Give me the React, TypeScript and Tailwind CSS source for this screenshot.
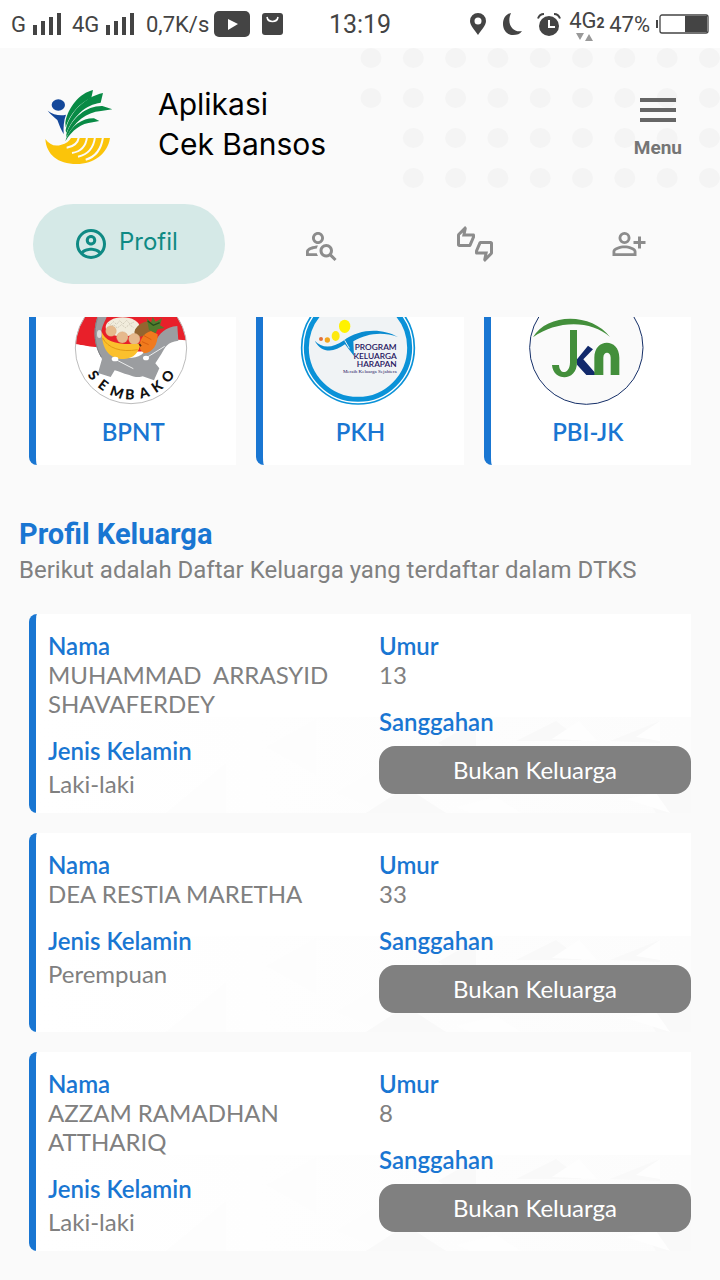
import React from 'react';
import { MdOutlineThumbsUpDown } from 'react-icons/md';

interface Member {
  name: string;
  gender: string;
  age: number;
}

const members: Member[] = [
  { name: 'MUHAMMAD  ARRASYID SHAVAFERDEY', gender: 'Laki-laki', age: 13 },
  { name: 'DEA RESTIA MARETHA', gender: 'Perempuan', age: 33 },
  { name: 'AZZAM RAMADHAN ATTHARIQ', gender: 'Laki-laki', age: 8 },
];

const Signal = () => (
  <svg width="28" height="22" viewBox="0 0 28 22" fill="#444">
    <path d="M0 12h4v10H0zM8 8h4v14H8zM16 4h4v18h-4zM24 0h4v22h-4z" />
  </svg>
);

const StatusBar = () => (
  <div className="flex h-12 items-center bg-white px-[11px] font-['Roboto',sans-serif] text-[22px] text-[#444]">
    <div className="flex flex-1 items-center">
      <span className="w-[22px]">G</span>
      <Signal />
      <span className="ml-[11px] w-[34px]">4G</span>
      <Signal />
      <span className="ml-3 w-[68px]">0,7K/s</span>
      <svg width="36" height="26" viewBox="0 0 36 26">
        <rect width="36" height="26" rx="5" fill="#444" />
        <path d="M14 8l10 5-10 6z" fill="#fff" />
      </svg>
      <svg className="ml-3" width="21" height="22" viewBox="0 0 21 22">
        <rect width="21" height="22" rx="3" fill="#444" />
        <path d="M5 4c1 6 10 6 11 0" fill="none" stroke="#fff" strokeWidth="1.6" />
      </svg>
    </div>
    <span className="text-[25px]">13:19</span>
    <div className="flex flex-1 items-center justify-end">
      <svg width="16" height="22" viewBox="0 0 16 22" fill="#444">
        <path
          fillRule="evenodd"
          d="M8 0a8 8 0 0 0-8 8c0 5 5 9 8 14 3-5 8-9 8-14a8 8 0 0 0-8-8zm0 4.500a3.500 3.500 0 1 1 0 7 3.500 3.500 0 0 1 0-7z"
        />
      </svg>
      <svg className="ml-[17px]" width="19" height="22" viewBox="0 0 19 22" fill="#444">
        <path d="M8 0C3 1 0 5 0 11c0 6 4 11 10 11 4 0 7-1 9-4C10 20 3 11 8 0z" />
      </svg>
      <svg className="ml-[15px]" width="24" height="23" viewBox="0 0 24 23">
        <circle cx="12" cy="13" r="10" fill="#444" />
        <path d="M1 5.500C2 2.500 4 1 7 1M23 5.500C22 2.500 20 1 17 1" fill="none" stroke="#444" strokeWidth="2" />
        <path d="M12 7v7h6" fill="none" stroke="#fff" strokeWidth="2" />
      </svg>
      <span className="relative ml-2 flex w-[34px] items-baseline pb-[6px] leading-7">
        4G<span className="text-sm font-bold leading-4">2</span>
        <svg className="absolute bottom-0 left-[7px]" width="18" height="8" viewBox="0 0 18 8" fill="#999">
          <path d="M0 0h8L4 7zM9 8h8l-4-7z" />
        </svg>
      </span>
      <span className="ml-[6px]">47%</span>
      <svg className="ml-[6px]" width="53" height="20" viewBox="0 0 53 20">
        <path d="M1 6v8" stroke="#444" strokeWidth="2" />
        <rect x="4" y="1" width="48" height="18" rx="2" fill="#fff" stroke="#444" strokeWidth="1.3" />
        <path d="M29 2h22v16H29z" fill="#444" />
      </svg>
    </div>
  </div>
);

const Dots = () => {
  const dots: React.ReactNode[] = [];
  for (let row = 0; row < 4; row++) {
    for (let col = row < 2 ? 0 : 1; col < 9; col++) {
      dots.push(<ellipse key={`${row}-${col}`} cx={11 + col * 42.3} cy={10 + row * 40} rx="10.500" ry="10" />);
    }
  }
  return (
    <svg className="absolute right-0 top-0" width="360" height="142" viewBox="0 0 360 142" fill="#f4f4f4">
      {dots}
    </svg>
  );
};

const AppLogo = () => (
  <svg width="70" height="76" viewBox="72 87 210 228">
    <ellipse cx="115" cy="135" rx="20" ry="17" fill="#14489a" />
    <path d="M83 152c16 12 36 16 55 12-7 18-8 38-7 59-8-14-13-27-19-43-9-8-20-17-29-28z" fill="#14489a" />
    <g fill="#088a45">
      <path d="M136 188c7-46 44-89 83-98l-5 24c-35 14-65 48-77 88z" />
      <path d="M137 211c11-54 59-101 112-112l-7 29c-45 5-84 43-103 91z" />
      <path d="M139 223c17-51 61-86 108-85l30 10-34 5c-45 3-79 33-104 79z" />
      <path d="M139 234c17-39 49-60 83-59l16 8-20 4c-35 3-61 23-82 57z" />
    </g>
    <path
      d="M76 237c12 17 29 24 48 17 14-3 24-10 29-20h117c-7 48-49 78-100 78-57 0-91-29-94-75z"
      fill="#fbc40a"
    />
    <g fill="none" stroke="#fafafa" strokeWidth="6">
      <path d="M177 231c-3 16-15 29-37 32" />
      <path d="M201 231c-3 28-20 44-45 48" />
      <path d="M225 231c-4 33-23 53-51 59" />
      <path d="M249 231c-5 37-24 60-52 68" />
    </g>
  </svg>
);

const Header = () => (
  <header className="relative flex items-start pb-[39px] pl-11 pr-[38px] pt-9">
    <Dots />
    <div className="pt-[5px]">
      <AppLogo />
    </div>
    <h1 className="ml-11 flex-1 font-['Inter',sans-serif] text-[30px] leading-10 text-black">
      Aplikasi
      <br />
      Cek Bansos
    </h1>
    <button
      type="button"
      className="relative mt-[14px] flex flex-col items-center gap-4 font-['Roboto',sans-serif] text-[19px] font-bold leading-5 text-[#757575]"
    >
      <svg width="36" height="24" viewBox="0 0 36 24" fill="#666">
        <path d="M0 0h36v4H0zM0 10h36v4H0zM0 20h36v4H0z" />
      </svg>
      Menu
    </button>
  </header>
);

const Tabs = () => (
  <nav className="flex pl-[33px] pr-[14px] text-[#8c8c8c]">
    <a
      href="#profil"
      className="mr-[19px] flex h-20 w-48 items-center gap-[10px] rounded-full bg-[#d5e9e7] pl-10 font-['Inter',sans-serif] text-2xl text-[#0f8a84]"
    >
      <svg width="36" height="36" viewBox="0 0 24 24" fill="currentColor">
        <path d="M12,2A10,10 0 0,0 2,12A10,10 0 0,0 12,22A10,10 0 0,0 22,12A10,10 0 0,0 12,2M7.07,18.28C7.5,17.38 10.12,16.5 12,16.5C13.88,16.5 16.5,17.38 16.93,18.28C15.57,19.36 13.86,20 12,20C10.14,20 8.43,19.36 7.07,18.28M18.36,16.83C16.93,15.09 13.46,14.5 12,14.5C10.54,14.5 7.07,15.09 5.64,16.83C4.62,15.5 4,13.82 4,12C4,7.59 7.59,4 12,4C16.41,4 20,7.59 20,12C20,13.82 19.38,15.5 18.36,16.83M12,6C10.06,6 8.5,7.56 8.5,9.5C8.5,11.44 10.06,13 12,13C13.94,13 15.5,11.44 15.5,9.5C15.5,7.56 13.94,6 12,6M12,11A1.5,1.5 0 0,1 10.5,9.5A1.5,1.5 0 0,1 12,8A1.5,1.5 0 0,1 13.5,9.5A1.5,1.5 0 0,1 12,11Z" />
      </svg>
      <span className="pb-1">Profil</span>
    </a>
    <a href="#cari" aria-label="Cari" className="flex flex-1 items-center justify-center">
      <svg width="36" height="36" viewBox="0 0 24 24" fill="currentColor">
        <path d="M10 13C9.65 13.59 9.36 14.24 9.19 14.93C6.5 15.16 3.9 16.42 3.9 17V18.1H9.2C9.37 18.78 9.65 19.42 10 20H2V17C2 14.34 7.33 13 10 13M10 4C12.21 4 14 5.79 14 8C14 9.95 12.6 11.58 10.75 11.93C10.5 11.98 10.25 12 10 12C7.79 12 6 10.21 6 8S7.79 4 10 4M10 5.9C8.84 5.9 7.9 6.84 7.9 8S8.84 10.1 10 10.1 12.1 9.16 12.1 8 11.16 5.9 10 5.9M15.5 12C18 12 20 14 20 16.5C20 17.38 19.75 18.21 19.31 18.9L22.39 22L21 23.39L17.88 20.32C17.19 20.75 16.37 21 15.5 21C13 21 11 19 11 16.5C11 14 13 12 15.5 12M15.5 14C14.12 14 13 15.12 13 16.5S14.12 19 15.5 19 18 17.88 18 16.5 16.88 14 15.5 14Z" />
      </svg>
    </a>
    <a href="#tanggapan" aria-label="Tanggapan" className="flex flex-1 items-center justify-center">
      <MdOutlineThumbsUpDown size={36} />
    </a>
    <a href="#usulan" aria-label="Usulan" className="flex flex-1 items-center justify-center">
      <svg width="36" height="36" viewBox="0 0 24 24" fill="currentColor">
        <path
          transform="matrix(-1 0 0 1 24 0)"
          d="M15,4A4,4 0 0,0 11,8A4,4 0 0,0 15,12A4,4 0 0,0 19,8A4,4 0 0,0 15,4M15,5.9C16.16,5.9 17.1,6.84 17.1,8C17.1,9.16 16.16,10.1 15,10.1A2.1,2.1 0 0,1 12.9,8A2.1,2.1 0 0,1 15,5.9M4,7V10H1V12H4V15H6V12H9V10H6V7H4M15,13C12.33,13 7,14.33 7,17V20H23V17C23,14.33 17.67,13 15,13M15,14.9C17.97,14.9 21.1,16.36 21.1,17V18.1H8.9V17C8.9,16.36 12,14.9 15,14.9Z"
        />
      </svg>
    </a>
  </nav>
);

// degrees away from straight down, half of the letter's width
const arcLetters = [
  [54, 12],
  [37, 12],
  [19, 17],
  [2, 13],
  [-16, 14],
  [-34, 14],
  [-52, 16],
].map(([deg, half]) => {
  const a = (deg * Math.PI) / 180;
  return {
    x: 333 - 154 * Math.sin(a) - half * Math.cos(a),
    y: 129 + 154 * Math.cos(a) - half * Math.sin(a),
    deg,
  };
});

const SembakoLogo = () => (
  <svg width="120" height="88" viewBox="159 36 360 264">
    <clipPath id="sembako">
      <circle cx="333" cy="129" r="167" />
    </clipPath>
    <g clipPath="url(#sembako)">
      <path d="M159 -40h350v340H159z" fill="#fff" />
      <path d="M159 36h350v72c-40-2-64 2-80 20-60 16-120 16-190-2-20 2-50-8-80-8z" fill="#e8202a" />
      <path d="M425 122c20-20 50-20 84-14v50h-90zM160 116c30 4 50 12 70 12l10 30h-80z" fill="#fff" />
      <path
        d="M232 36h28c-9 22-20 36-14 60 6 30 20 48 42 58 25 5 55 9 76-5l40-35c14-30 32-48 68-51l3 44c-34 4-40 20-51 40l-18 28 12 15-16 36-34-12c-8 4-30 2-40-4-20-4-34-12-44-14l-12 20-38-12 12-42c-22-36-30-80-14-126z"
        fill="#9b9da0"
      />
      <path d="M232 40c-12 40-8 84 12 116" fill="none" stroke="#7e8184" strokeWidth="3" />
      <ellipse cx="308" cy="66" rx="51" ry="29" fill="#f1ecdc" />
      <path
        d="M263 54l8 5 9-9 10 8 9-11 10 10 11-11 10 11 12-6M270 65l12-5 10 9 13-10 11 9 12-9 12 8"
        fill="none"
        stroke="#cdc6b5"
        strokeWidth="3"
        strokeDasharray="4 3"
      />
      <ellipse cx="372" cy="72" rx="32" ry="19" transform="rotate(-32 372 72)" fill="#94652f" />
      <path d="M361 134c-8-24 9-51 33-56l19 10c1 28-14 56-41 57z" fill="#f07a1d" />
      <path d="M372 92l22 12M366 110l20 9" stroke="#d75e10" strokeWidth="3" />
      <path d="M387 75l-7-35 13 13 5-17 9 14 19-10-6 21 14 8-21 4-6 12z" fill="#527c2d" />
      <path d="M383 48l17 13 19-8" fill="none" stroke="#244f1c" strokeWidth="4" />
      <g fill="#e6b98c" stroke="#d9a474" strokeWidth="1">
        <circle cx="273" cy="78" r="16" />
        <circle cx="307" cy="97" r="17" />
        <circle cx="343" cy="102" r="17" />
      </g>
      <path d="M245 80c10 28 45 42 115 36-1 25-19 44-48 46-36 1-66-20-67-82z" fill="#fbc02d" />
      <path d="M248 99c15 30 55 44 105 35" fill="none" stroke="#e09a16" strokeWidth="3" />
      <path d="M358 117l5 7" stroke="#4a2a12" strokeWidth="5" />
      <path d="M284 162l56 29M376 160l58-36" fill="none" stroke="#eceded" strokeWidth="3" />
      <ellipse cx="285" cy="162" rx="10" ry="7" fill="#fff" />
      <ellipse cx="378" cy="159" rx="9" ry="7" fill="#fff" />
      <ellipse cx="238" cy="87" rx="7" ry="12" fill="#ddd" />
    </g>
    <circle cx="333" cy="129" r="167" fill="none" stroke="#bdbdbd" strokeWidth="3" />
    <text
      x={arcLetters.map((l) => l.x).join(' ')}
      y={arcLetters.map((l) => l.y).join(' ')}
      rotate={arcLetters.map((l) => l.deg).join(' ')}
      fill="#111"
      fontFamily="Lato, sans-serif"
      fontSize="42"
      fontWeight="900"
    >
      SEMBAKO
    </text>
  </svg>
);

const PkhLogo = () => (
  <svg width="120" height="88" viewBox="165 36 360 264">
    <circle cx="339" cy="128" r="169" fill="#fff" stroke="#0a92d8" strokeWidth="5" />
    <circle cx="339" cy="128" r="155" fill="#f0f3f5" stroke="#0a92d8" strokeWidth="15" />
    <circle cx="228" cy="102" r="6" fill="#e2703a" />
    <circle cx="247" cy="105" r="8" fill="#f2a51c" />
    <ellipse cx="272" cy="93" rx="12" ry="15" fill="#fde910" />
    <ellipse cx="299" cy="64" rx="17" ry="20" fill="#fff200" />
    <path d="M209 107c22 23 52 23 86 0 50-38 118-38 164-11-50-17-92-10-134 13l2 44-27-35c-34 26-72 26-91-11z" fill="#0a8bd0" />
    <path d="M299 106l14 24" stroke="#f0f3f5" strokeWidth="3" />
    <g fill="#25145e" textAnchor="end">
      <g fontFamily="Lato, sans-serif" fontSize="25" fontWeight="600">
        <text x="455" y="136">PROGRAM</text>
        <text x="455" y="161">KELUARGA</text>
        <text x="455" y="186">HARAPAN</text>
      </g>
      <text x="455" y="205" fontFamily="'Liberation Serif', serif" fontSize="15">
        Meraih Keluarga Sejahtera
      </text>
    </g>
  </svg>
);

const JknLogo = () => (
  <svg width="120" height="88" viewBox="159 36 360 264">
    <circle cx="334" cy="128" r="170" fill="#fafafa" stroke="#152f68" strokeWidth="3" />
    <path d="M174 97c42-74 176-75 231-1-57-53-163-50-231 1z" fill="#438f3b" />
    <path d="M306 163l33-41 15 11-29 30 41 47h-32l-28-31z" fill="#12296b" />
    <path d="M285 75h21v97c0 60-72 57-75 8h21c2 32 33 27 33-8z" fill="#438f3b" />
    <path d="M358 210v-52c0-60 75-60 75 0v52h-26v-52c0-20-22-20-22 0v52z" fill="#438f3b" />
  </svg>
);

const programs = [
  { label: 'BPNT', logo: <SembakoLogo /> },
  { label: 'PKH', logo: <PkhLogo /> },
  { label: 'PBI-JK', logo: <JknLogo /> },
];

// faint triangle texture at the foot of a member card
const Texture = () => (
  <svg className="absolute bottom-0 right-0 w-full" viewBox="0 0 655 96">
    <defs>
      <linearGradient id="fade" x1="0" x2="1" y1="0" y2="0">
        <stop offset="0" stopColor="#fff" />
        <stop offset="1" stopColor="#fcfcfc" />
      </linearGradient>
    </defs>
    <path d="M0 0h655v96H0z" fill="url(#fade)" />
    <path d="M130 96l60-50v50zM230 30l50-28v56zM300 76l50-30v50z" fill="#fdfdfd" />
    <path d="M402 26l38-22v44zM480 24l40-20 26 20zM574 24l50-20v22zM330 96l40-26 40 26zM610 80l45-24v40h-35z" fill="#f9f9f9" />
    <path d="M516 22l27-18 18 20zM600 20l24-16v20zM420 90l40-10 25 16h-50zM590 82l30-6 14 20z" fill="#fefefe" />
  </svg>
);

const Label = ({ children }: { children: React.ReactNode }) => (
  <h3 className="font-semibold leading-7 text-[#1976d2]">{children}</h3>
);

const MemberCard: React.FC<{ member: Member }> = ({ member }) => (
  <article className="relative min-h-[199px] rounded-l-lg border-l-[7px] border-[#1976d2] bg-white">
    <Texture />
    <div className="relative -ml-[7px] grid grid-cols-2 pb-[14px] pt-[18px]">
      <div className="pl-[19px]">
        <Label>Nama</Label>
        <p className="mb-[19px] whitespace-pre-wrap">{member.name}</p>
        <Label>Jenis Kelamin</Label>
        <p className="mt-1">{member.gender}</p>
      </div>
      <div className="pl-[19px]">
        <Label>Umur</Label>
        <p className="mb-[19px]">{member.age}</p>
        <Label>Sanggahan</Label>
        <button type="button" className="mt-[10px] h-12 w-full rounded-2xl bg-[#808080] pb-[2px] text-white">
          Bukan Keluarga
        </button>
      </div>
    </div>
  </article>
);

const App: React.FC = () => {
  return (
    <div className="min-h-screen bg-[#fafafa] pb-[29px] font-['Lato',sans-serif] text-2xl leading-[29px] text-[#808080]">
      <StatusBar />
      <Header />
      <Tabs />
      <main className="pt-[33px]">
        <section className="mx-[29px] grid grid-cols-3 gap-5">
          {programs.map((program) => (
            <div
              key={program.label}
              className="flex flex-col items-center rounded-bl-lg border-l-[7px] border-[#1976d2] bg-white pb-[19px] pr-[6px]"
            >
              {program.logo}
              <h3 className="mt-3 font-semibold text-[#1976d2]">{program.label}</h3>
            </div>
          ))}
        </section>
        <section className="mt-[51px]">
          <div className="pl-[19px] font-['Roboto',sans-serif]">
            <h2 className="text-[29px] font-bold leading-9 text-[#1976d2]">Profil Keluarga</h2>
            <p className="leading-9">Berikut adalah Daftar Keluarga yang terdaftar dalam DTKS</p>
          </div>
          <div className="mx-[29px] mt-[26px] flex flex-col gap-5">
            {members.map((member) => (
              <MemberCard key={member.name} member={member} />
            ))}
          </div>
        </section>
      </main>
    </div>
  );
};

export default App;
